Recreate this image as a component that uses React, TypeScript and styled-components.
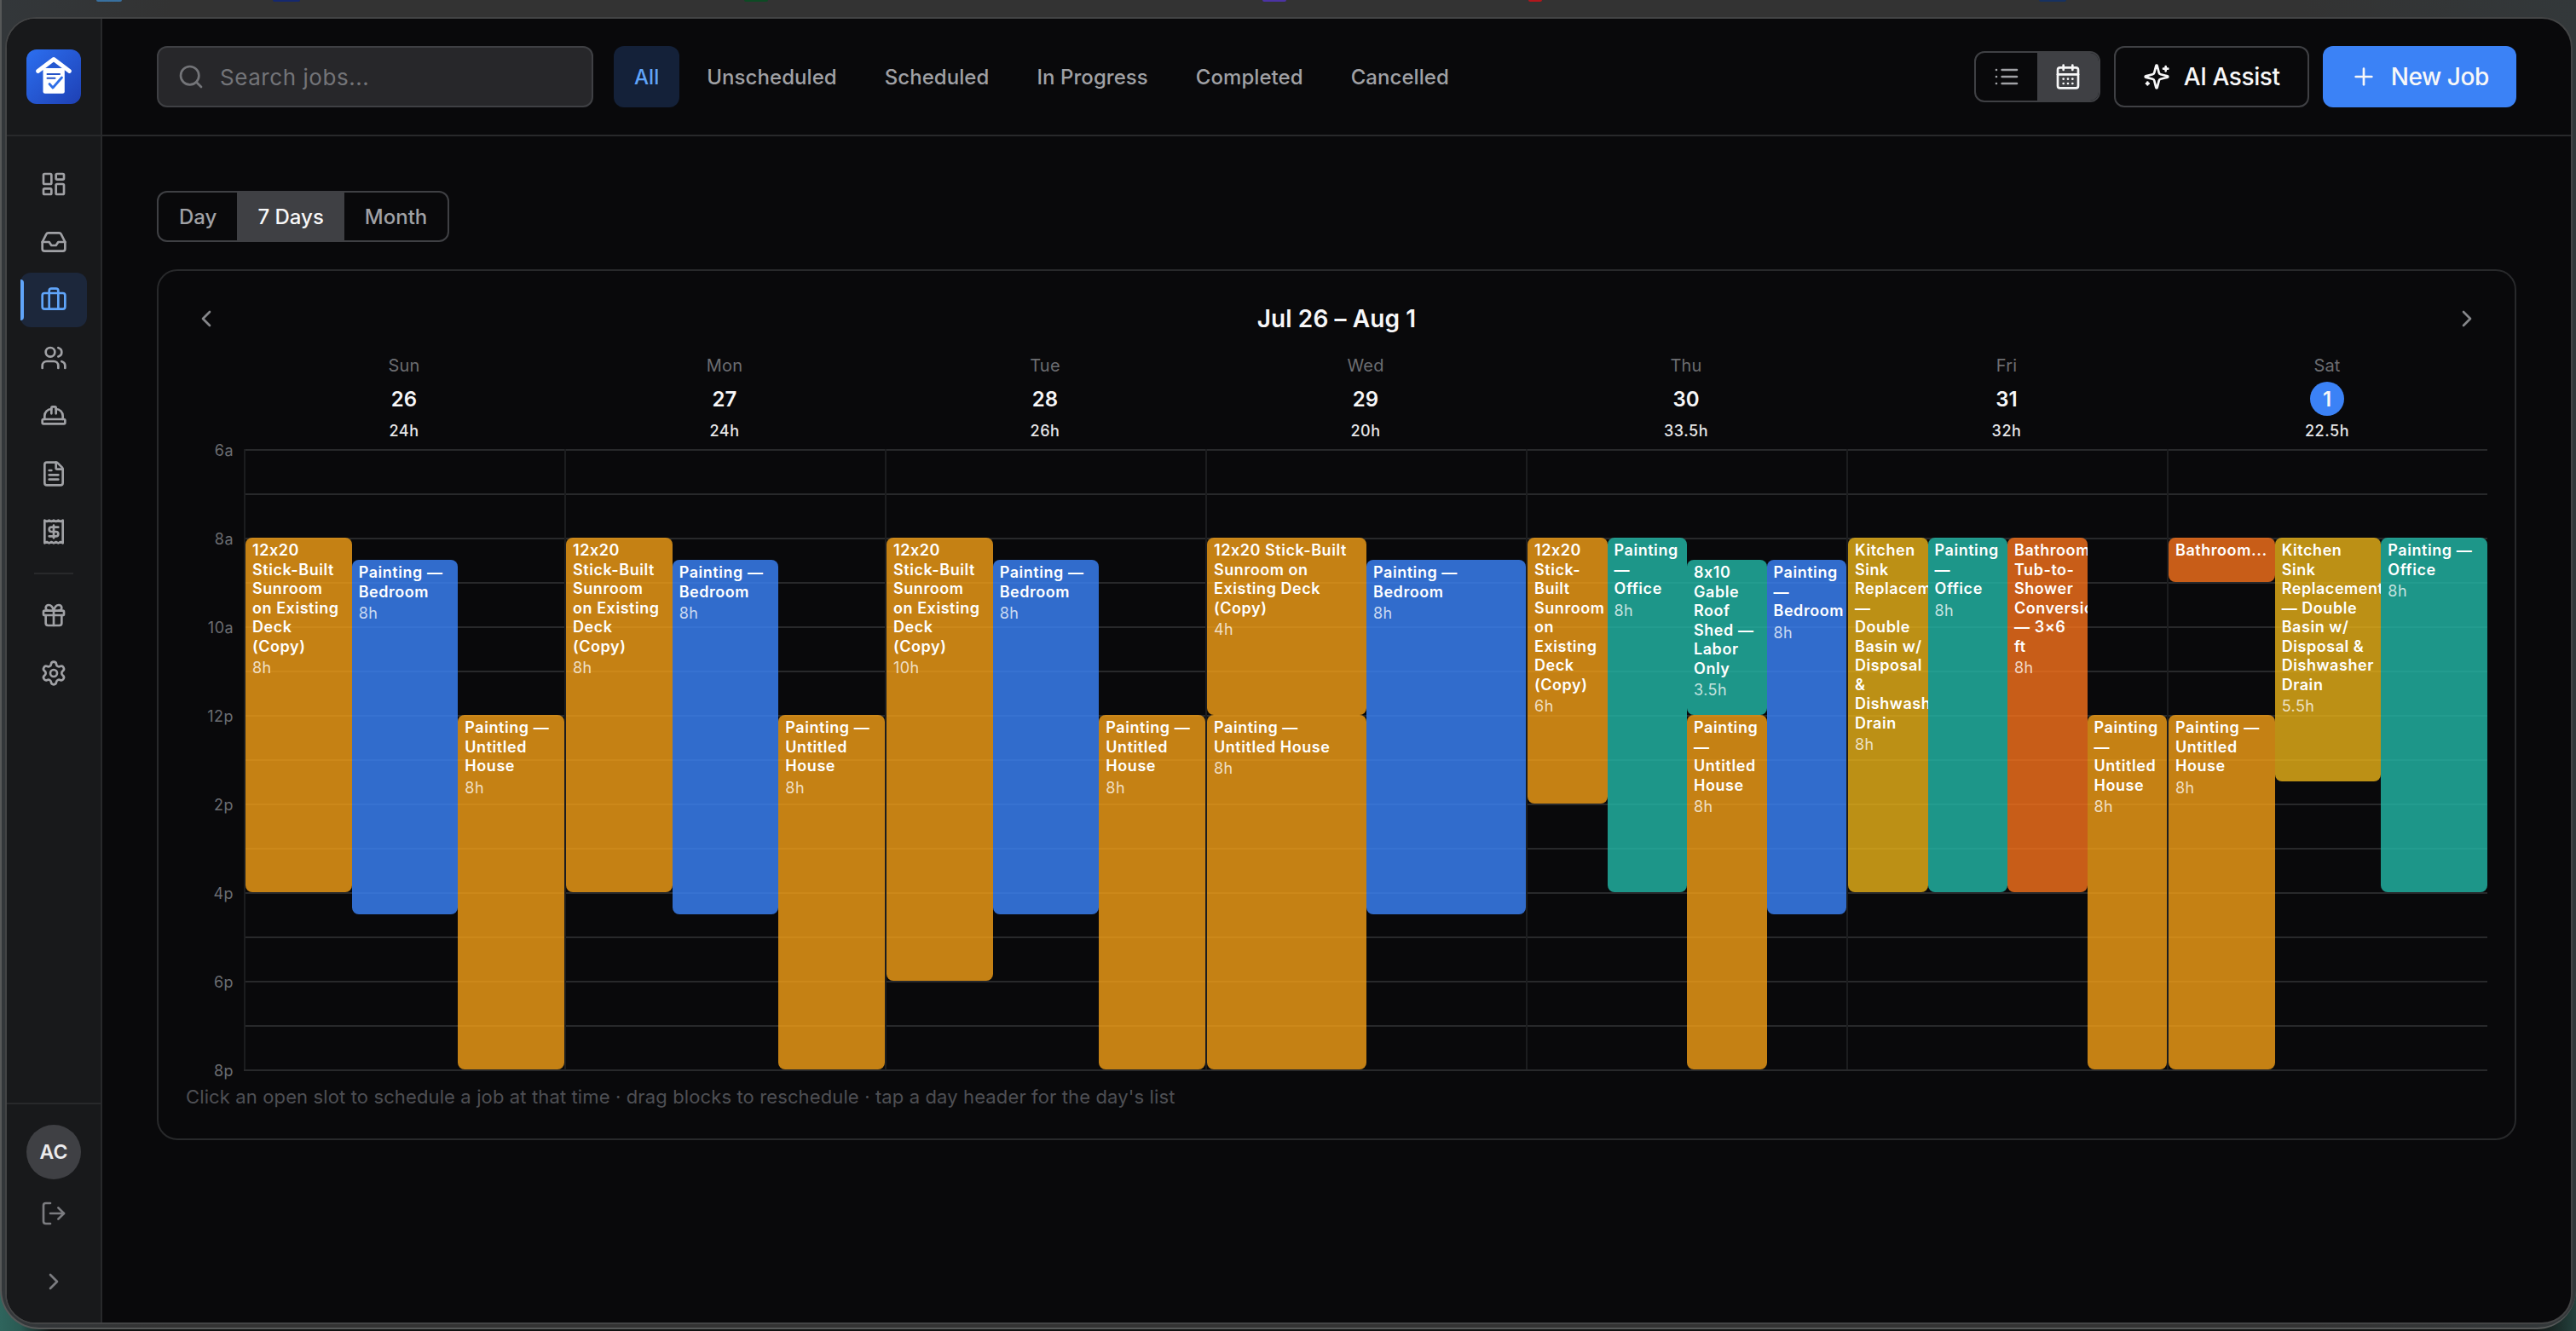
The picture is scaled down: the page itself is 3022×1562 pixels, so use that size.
import React from "react";
import styled, { createGlobalStyle } from "styled-components";
import {
  Briefcase,
  CalendarDays,
  ChevronLeft,
  ChevronRight,
  FileText,
  Gift,
  HardHat,
  Inbox,
  LayoutDashboard,
  LogOut,
  Plus,
  Receipt,
  Search,
  Settings,
  Users,
} from "lucide-react";

const color = {
  bg: "#09090b",
  sidebar: "#18191b",
  line: "#28292b",
  lineFaint: "#1c1d1f",
  strong: "#3f4044",
  text: "#f7f7f8",
  muted: "#a0a1a5",
  dim: "#6c6d71",
  faint: "#4e4f54",
  blue: "#3b82f6",
  sky: "#60a5fa",
};

const GlobalStyle = createGlobalStyle`
  *, *::before, *::after { box-sizing: border-box; }
  body { margin: 0; background: #101312; }
  button { font: inherit; letter-spacing: inherit; border: 0; margin: 0; cursor: pointer; }
`;

/* ---------- Browser frame ---------- */

const Desktop = styled.div`
  width: 100vw;
  height: 100vh;
  overflow: hidden;
  background: linear-gradient(90deg, #2f655d 0, #2a5a53 24px, #101312 60px, #101312 calc(100% - 50px), #24413d 100%);
  font-family: Inter, "Liberation Sans", sans-serif;
  color: ${color.text};
`;

const Frame = styled.div`
  height: 1560px;
  padding: 0 4px 4px;
  border: 2px solid #565858;
  border-top: 0;
  border-right: 0;
  border-radius: 0 0 46px 46px;
  background: linear-gradient(90deg, #33373a 0, #333 200px, #333 2700px, #33383a 100%);
`;

const TabStrip = styled.div`
  display: flex;
  height: 20px;
`;

const Favicon = styled.span<{ $gap: number; $width: number; $tone: string }>`
  flex: none;
  width: ${(p) => p.$width}px;
  height: 2px;
  margin-left: ${(p) => p.$gap}px;
  border-radius: 0 0 3px 3px;
  background: ${(p) => p.$tone};
`;

const Page = styled.div`
  display: flex;
  height: 1534px;
  overflow: hidden;
  border: 2px solid #434445;
  border-radius: 36px;
  background: ${color.bg};
`;

/* ---------- Sidebar ---------- */

const Sidebar = styled.aside`
  display: flex;
  flex-direction: column;
  flex: none;
  width: 112px;
  border-right: 2px solid ${color.line};
  background: ${color.sidebar};
`;

const Brand = styled.div`
  display: flex;
  align-items: center;
  justify-content: center;
  height: 138px;
  border-bottom: 2px solid ${color.line};
`;

const Nav = styled.nav`
  display: flex;
  flex: 1;
  flex-direction: column;
  gap: 4px;
  padding: 24px 16px;
`;

const NavItem = styled.button<{ $active?: boolean }>`
  position: relative;
  display: flex;
  align-items: center;
  justify-content: center;
  height: 64px;
  padding: 0;
  border-radius: 12px;
  background: ${(p) => (p.$active ? "#1c273b" : "transparent")};
  color: ${(p) => (p.$active ? color.sky : color.muted)};
`;

const ActiveBar = styled.span`
  position: absolute;
  left: 0;
  top: 8px;
  width: 4px;
  height: 48px;
  border-radius: 0 4px 4px 0;
  background: ${color.sky};
`;

const NavDivider = styled.hr`
  width: 46px;
  height: 2px;
  margin: 12px auto;
  border: 0;
  background: ${color.line};
`;

const Account = styled.div`
  display: flex;
  flex-direction: column;
  align-items: center;
  height: 258px;
  padding-top: 24px;
  border-top: 2px solid ${color.line};
  color: #7b7c80;
`;

const Avatar = styled.div`
  display: flex;
  align-items: center;
  justify-content: center;
  width: 64px;
  height: 64px;
  margin-bottom: 8px;
  border-radius: 50%;
  background: ${color.strong};
  color: #ebebed;
  font-size: 23px;
  font-weight: 600;
`;

const AccountButton = styled.button`
  display: flex;
  align-items: center;
  justify-content: center;
  width: 64px;
  height: 64px;
  margin-bottom: 16px;
  padding: 0;
  background: transparent;
  color: inherit;
`;

/* ---------- Toolbar ---------- */

const Main = styled.main`
  display: flex;
  flex: 1;
  flex-direction: column;
  min-width: 0;
`;

const Toolbar = styled.header`
  display: flex;
  align-items: center;
  flex: none;
  height: 138px;
  padding: 0 64px;
  border-bottom: 2px solid ${color.line};
`;

const SearchBox = styled.label`
  display: flex;
  align-items: center;
  gap: 18px;
  width: 512px;
  height: 72px;
  padding-left: 22px;
  border: 2px solid ${color.strong};
  border-radius: 12px;
  background: #27272a;
  color: #737478;
`;

const SearchInput = styled.input`
  flex: 1;
  min-width: 0;
  padding: 0;
  border: 0;
  outline: 0;
  background: transparent;
  color: ${color.text};
  font: 400 26px Inter, "Liberation Sans", sans-serif;
  letter-spacing: 0.55px;
  &::placeholder {
    color: #737478;
    opacity: 1;
  }
`;

const Filters = styled.div`
  display: flex;
  gap: 8px;
  margin-left: 24px;
`;

const FilterChip = styled.button<{ $active?: boolean }>`
  height: 72px;
  padding: 0 24px;
  border-radius: 12px;
  background: ${(p) => (p.$active ? "#142139" : "transparent")};
  color: ${(p) => (p.$active ? color.sky : color.muted)};
  font-size: 24px;
  font-weight: 450;
  letter-spacing: 0.06px;
`;

const Actions = styled.div`
  display: flex;
  align-items: center;
  gap: 16px;
  margin-left: auto;
`;

const Segmented = styled.div`
  display: flex;
  align-self: center;
  width: max-content;
  height: 60px;
  overflow: hidden;
  border: 2px solid ${color.strong};
  border-radius: 12px;
`;

const IconSegment = styled.button<{ $active?: boolean }>`
  display: flex;
  align-items: center;
  justify-content: center;
  width: 72px;
  padding: 0;
  background: ${(p) => (p.$active ? color.strong : "transparent")};
  color: ${(p) => (p.$active ? color.text : color.muted)};
`;

const TextSegment = styled.button<{ $active?: boolean }>`
  padding: 0 24px;
  background: ${(p) => (p.$active ? color.strong : "transparent")};
  color: ${(p) => (p.$active ? color.text : color.muted)};
  font-size: 24px;
  font-weight: 450;
`;

const ActionButton = styled.button<{ $primary?: boolean }>`
  display: flex;
  align-items: center;
  gap: 16px;
  height: 72px;
  padding: 0 32px;
  border: ${(p) => (p.$primary ? "0" : `2px solid ${color.strong}`)};
  border-radius: 12px;
  background: ${(p) => (p.$primary ? color.blue : "transparent")};
  color: ${color.text};
  font-size: 28px;
  font-weight: 450;
  letter-spacing: -0.4px;
`;

/* ---------- Calendar ---------- */

const Content = styled.div`
  display: flex;
  flex-direction: column;
  align-items: stretch;
  gap: 32px;
  padding: 64px;
`;

const RangeTabs = styled(Segmented)`
  align-self: flex-start;
`;

const Card = styled.section`
  display: flex;
  flex-direction: column;
  height: 1022px;
  padding: 32px;
  border: 2px solid ${color.line};
  border-radius: 24px;
`;

const CardHeader = styled.div`
  display: flex;
  align-items: center;
  justify-content: space-between;
  height: 48px;
  margin-bottom: 16px;
`;

const CardTitle = styled.h2`
  margin: 0;
  font-size: 28px;
  font-weight: 600;
  letter-spacing: 0.1px;
`;

const PagerButton = styled.button`
  display: flex;
  align-items: center;
  justify-content: center;
  width: 48px;
  height: 48px;
  padding: 0;
  background: transparent;
  color: #85868a;
`;

const DayHeads = styled.div`
  display: grid;
  grid-template-columns: repeat(7, 1fr);
  padding: 0 0 8px 68px;
`;

const DayHead = styled.div`
  display: flex;
  flex-direction: column;
  align-items: center;
  gap: 4px;
`;

const DayName = styled.span`
  color: ${color.dim};
  font-size: 20px;
  line-height: 30px;
  letter-spacing: 0.2px;
`;

const DayNumber = styled.span<{ $today?: boolean }>`
  display: flex;
  align-items: center;
  justify-content: center;
  width: 40px;
  height: 40px;
  border-radius: 50%;
  background: ${(p) => (p.$today ? color.blue : "transparent")};
  font-size: 24px;
  font-weight: 600;
`;

const DayTotal = styled.span`
  color: #e6e6e8;
  font-size: 18px;
  font-weight: 500;
  line-height: 27px;
  letter-spacing: 0.55px;
`;

const Schedule = styled.div`
  display: flex;
  height: 730px;
`;

const Gutter = styled.div`
  display: flex;
  flex-direction: column;
  justify-content: space-between;
  width: 68px;
  height: 755px;
  margin-top: -12px;
  padding-right: 12px;
  color: ${color.dim};
  font-size: 18px;
  line-height: 27px;
  letter-spacing: 0.45px;
  text-align: right;
`;

const Columns = styled.div`
  display: grid;
  flex: 1;
  grid-template-columns: repeat(7, 1fr);
  border-bottom: 2px solid ${color.line};
`;

const Column = styled.div`
  position: relative;
  border-left: 2px solid ${color.lineFaint};
`;

const HourSlot = styled.div`
  height: 52px;
  border-top: 2px solid ${color.line};
`;

const Block = styled.article<{ $tone: string }>`
  position: absolute;
  overflow: hidden;
  padding: 4px 8px;
  border-radius: 8px;
  background: ${(p) => p.$tone};
`;

const BlockTitle = styled.div<{ $clip?: boolean }>`
  color: #fff;
  font-size: 18px;
  font-weight: 580;
  line-height: 22.5px;
  letter-spacing: 0.55px;
  white-space: ${(p) => (p.$clip ? "nowrap" : "normal")};
`;

const BlockHours = styled.div`
  color: rgba(255, 255, 255, 0.75);
  font-size: 18px;
  line-height: 27px;
  letter-spacing: 0.45px;
`;

const Hint = styled.p`
  margin: 14px 0 0;
  color: ${color.faint};
  font-size: 22px;
  line-height: 33px;
  letter-spacing: 0.125px;
`;

/* ---------- Data ---------- */

const tones = {
  amber: "rgba(245, 160, 22, 0.8)",
  blue: "rgba(59, 130, 246, 0.82)",
  teal: "rgba(34, 184, 166, 0.81)",
  gold: "rgba(234, 179, 24, 0.8)",
  orange: "rgba(249, 115, 28, 0.8)",
};

type Tone = keyof typeof tones;
type Job = { title: string; tone: Tone; start: number; hours: number; lane: number };
type Day = { name: string; date: number; total: string; lanes: number; today?: boolean; jobs: Job[] };

const sunroom = (hours: number): Job => ({
  title: "12x20 Stick-Built Sunroom on Existing Deck (Copy)", tone: "amber", start: 8, hours, lane: 0,
});
const bedroom = (lane: number): Job => ({ title: "Painting — Bedroom", tone: "blue", start: 8.5, hours: 8, lane });
const house = (lane: number): Job => ({ title: "Painting — Untitled House", tone: "amber", start: 12, hours: 8, lane });
const office = (lane: number): Job => ({ title: "Painting — Office", tone: "teal", start: 8, hours: 8, lane });
const kitchen = (hours: number, lane: number): Job => ({
  title: "Kitchen Sink Replacement — Double Basin\u00a0w/ Disposal & Dishwasher Drain", tone: "gold", start: 8, hours, lane,
});

const days: Day[] = [
  { name: "Sun", date: 26, total: "24h", lanes: 3, jobs: [sunroom(8), bedroom(1), house(2)] },
  { name: "Mon", date: 27, total: "24h", lanes: 3, jobs: [sunroom(8), bedroom(1), house(2)] },
  { name: "Tue", date: 28, total: "26h", lanes: 3, jobs: [sunroom(10), bedroom(1), house(2)] },
  { name: "Wed", date: 29, total: "20h", lanes: 2, jobs: [sunroom(4), bedroom(1), house(0)] },
  {
    name: "Thu", date: 30, total: "33.5h", lanes: 4,
    jobs: [
      sunroom(6),
      office(1),
      { title: "8x10 Gable Roof Shed — Labor Only", tone: "teal", start: 8.5, hours: 3.5, lane: 2 },
      house(2),
      bedroom(3),
    ],
  },
  {
    name: "Fri", date: 31, total: "32h", lanes: 4,
    jobs: [
      kitchen(8, 0),
      office(1),
      { title: "Bathroom Tub-to-Shower Conversion — 3×6 ft", tone: "orange", start: 8, hours: 8, lane: 2 },
      house(3),
    ],
  },
  {
    name: "Sat", date: 1, total: "22.5h", lanes: 3, today: true,
    jobs: [
      { title: "Bathroom...", tone: "orange", start: 8, hours: 1, lane: 0 },
      house(0),
      kitchen(5.5, 1),
      office(2),
    ],
  },
];

const FIRST_HOUR = 6;
const HOUR_HEIGHT = 52;
const hourSlots = Array.from({ length: 14 }, (_, i) => i);
const hourLabels = ["6a", "8a", "10a", "12p", "2p", "4p", "6p", "8p"];

const navIcons = [LayoutDashboard, Inbox, Briefcase, Users, HardHat, FileText, Receipt];
const icon = { size: 32, strokeWidth: 2 };

const favicons = [
  { gap: 107, width: 30, tone: "#38709f" },
  { gap: 177, width: 32, tone: "#15286e" },
  { gap: 521, width: 28, tone: "#0d4a24" },
  { gap: 580, width: 28, tone: "#4c33a4" },
  { gap: 284, width: 16, tone: "#b3161c" },
  { gap: 583, width: 32, tone: "#173160" },
];

/* ---------- Drawn icons ---------- */

const Logo = () => (
  <svg width="64" height="64" viewBox="0 0 64 64" fill="none">
    <defs>
      <linearGradient id="brand" x1="0" y1="0" x2="64" y2="64" gradientUnits="userSpaceOnUse">
        <stop stopColor="#2c6ff0" />
        <stop offset="1" stopColor="#1e40b4" />
      </linearGradient>
    </defs>
    <rect width="64" height="64" rx="12" fill="url(#brand)" />
    <rect x="19.5" y="22" width="25.3" height="29.8" rx="2.5" fill="#fff" />
    <path d="M24 21 32 14.5 40 21Z" fill="#2558d0" />
    <path d="M13.5 25.5 32 11.5 50.5 25.5" stroke="#fff" strokeWidth="4.8" strokeLinecap="round" strokeLinejoin="round" />
    <path d="M24.5 29H39M24.5 33.8H33.5" stroke="#2352c8" strokeWidth="2" strokeLinecap="round" />
    <path d="M27 40.5 31 45 41.5 33" stroke="#2f6fe8" strokeWidth="2.8" strokeLinecap="round" strokeLinejoin="round" />
  </svg>
);

const ListIcon = () => (
  <svg width="32" height="32" viewBox="0 0 24 24" fill="none" stroke="currentColor" strokeWidth="2" strokeLinecap="round">
    <path d="M8 6h13M8 12h13M8 18h13M3 6h.01M3 12h.01M3 18h.01" />
  </svg>
);

const SparklesIcon = () => (
  <svg width="32" height="32" viewBox="0 0 24 24" fill="none" stroke="currentColor" strokeWidth="2" strokeLinecap="round" strokeLinejoin="round">
    <path d="M9.937 15.5A2 2 0 0 0 8.5 14.063l-6.135-1.582a.5.5 0 0 1 0-.962L8.5 9.936A2 2 0 0 0 9.937 8.5l1.582-6.135a.5.5 0 0 1 .963 0L14.063 8.5A2 2 0 0 0 15.5 9.937l6.135 1.581a.5.5 0 0 1 0 .964L15.5 14.063a2 2 0 0 0-1.437 1.437l-1.582 6.135a.5.5 0 0 1-.963 0z" />
    <path d="M20 3v4M22 5h-4M4 17v2M5 18H3" />
  </svg>
);

/* ---------- Views ---------- */

function JobBlock({ job, lanes }: { job: Job; lanes: number }) {
  const short = job.hours <= 1;
  return (
    <Block
      $tone={tones[job.tone]}
      style={{
        top: (job.start - FIRST_HOUR) * HOUR_HEIGHT,
        height: job.hours * HOUR_HEIGHT,
        left: `${(job.lane / lanes) * 100}%`,
        width: `${100 / lanes}%`,
      }}
    >
      <BlockTitle $clip={short}>{job.title}</BlockTitle>
      {!short && <BlockHours>{job.hours}h</BlockHours>}
    </Block>
  );
}

function SideNav() {
  return (
    <Sidebar>
      <Brand>
        <Logo />
      </Brand>
      <Nav>
        {navIcons.map((Icon, i) => (
          <NavItem key={i} $active={Icon === Briefcase}>
            {Icon === Briefcase && <ActiveBar />}
            <Icon {...icon} />
          </NavItem>
        ))}
        <NavDivider />
        <NavItem>
          <Gift {...icon} />
        </NavItem>
        <NavItem>
          <Settings {...icon} />
        </NavItem>
      </Nav>
      <Account>
        <Avatar>AC</Avatar>
        <AccountButton>
          <LogOut {...icon} />
        </AccountButton>
        <AccountButton>
          <ChevronRight {...icon} />
        </AccountButton>
      </Account>
    </Sidebar>
  );
}

export default function App() {
  return (
    <Desktop>
      <GlobalStyle />
      <Frame>
        <TabStrip>
          {favicons.map((f, i) => (
            <Favicon key={i} $gap={f.gap} $width={f.width} $tone={f.tone} />
          ))}
        </TabStrip>
        <Page>
          <SideNav />
          <Main>
            <Toolbar>
              <SearchBox>
                <Search {...icon} />
                <SearchInput placeholder="Search jobs..." />
              </SearchBox>
              <Filters>
                {["All", "Unscheduled", "Scheduled", "In Progress", "Completed", "Cancelled"].map((name) => (
                  <FilterChip key={name} $active={name === "All"}>
                    {name}
                  </FilterChip>
                ))}
              </Filters>
              <Actions>
                <Segmented>
                  <IconSegment>
                    <ListIcon />
                  </IconSegment>
                  <IconSegment $active>
                    <CalendarDays {...icon} />
                  </IconSegment>
                </Segmented>
                <ActionButton>
                  <SparklesIcon />
                  AI Assist
                </ActionButton>
                <ActionButton $primary>
                  <Plus {...icon} />
                  New Job
                </ActionButton>
              </Actions>
            </Toolbar>
            <Content>
              <RangeTabs>
                <TextSegment>Day</TextSegment>
                <TextSegment $active>7 Days</TextSegment>
                <TextSegment>Month</TextSegment>
              </RangeTabs>
              <Card>
                <CardHeader>
                  <PagerButton>
                    <ChevronLeft {...icon} />
                  </PagerButton>
                  <CardTitle>Jul 26 – Aug 1</CardTitle>
                  <PagerButton>
                    <ChevronRight {...icon} />
                  </PagerButton>
                </CardHeader>
                <DayHeads>
                  {days.map((day) => (
                    <DayHead key={day.name}>
                      <DayName>{day.name}</DayName>
                      <DayNumber $today={day.today}>{day.date}</DayNumber>
                      <DayTotal>{day.total}</DayTotal>
                    </DayHead>
                  ))}
                </DayHeads>
                <Schedule>
                  <Gutter>
                    {hourLabels.map((label) => (
                      <span key={label}>{label}</span>
                    ))}
                  </Gutter>
                  <Columns>
                    {days.map((day) => (
                      <Column key={day.name}>
                        {hourSlots.map((slot) => (
                          <HourSlot key={slot} />
                        ))}
                        {day.jobs.map((job, i) => (
                          <JobBlock key={i} job={job} lanes={day.lanes} />
                        ))}
                      </Column>
                    ))}
                  </Columns>
                </Schedule>
                <Hint>
                  Click an open slot to schedule a job at that time · drag blocks to reschedule · tap a day header for the day's list
                </Hint>
              </Card>
            </Content>
          </Main>
        </Page>
      </Frame>
    </Desktop>
  );
}
